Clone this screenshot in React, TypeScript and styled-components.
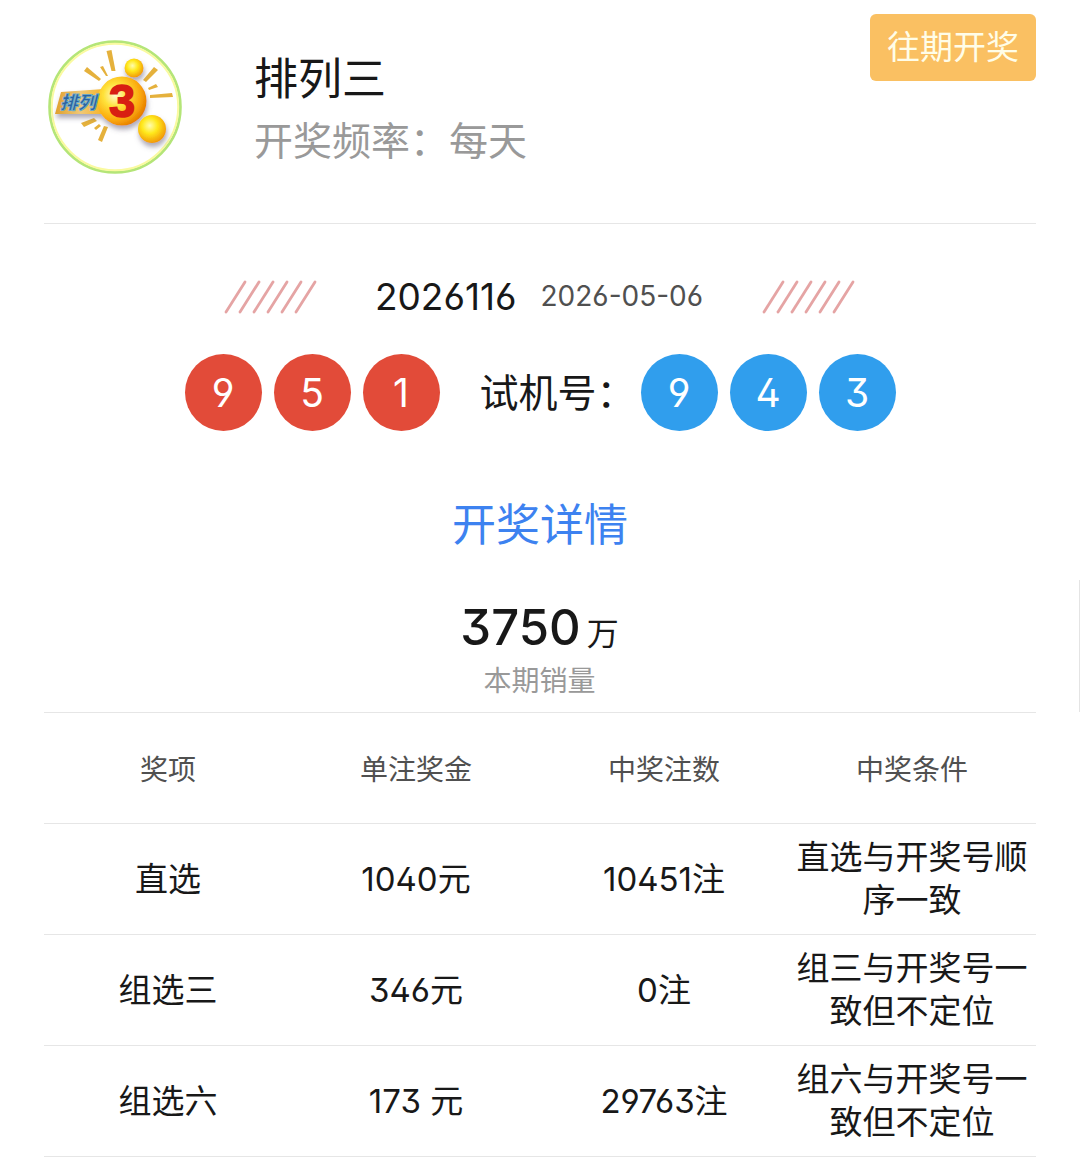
import React from "react";
import styled, { createGlobalStyle } from "styled-components";

const GlobalStyle = createGlobalStyle`
  *, *::before, *::after { box-sizing: border-box; }
  body {
    margin: 0;
    background: #fff;
    color: #181818;
    font-family: Inter, "Noto Sans CJK SC", sans-serif;
    font-feature-settings: "cv09", "ss01";
  }
`;

const Page = styled.main`
  padding-bottom: 1px;
`;

const Header = styled.header`
  display: flex;
  align-items: flex-start;
  margin: 0 44px;
  padding: 14px 0 49px;
  border-bottom: 1px solid #e6e6e6;
`;

const LogoSvg = styled.svg`
  flex: none;
  width: 134px;
  height: 134px;
  margin: 26px 72px 0 4px;
`;

const Heading = styled.div`
  flex: 1;
  padding-top: 33px;
`;

const Title = styled.h1`
  margin: 0;
  font-size: 44px;
  line-height: 64px;
  font-weight: 400;
`;

const Frequency = styled.p`
  margin: 0;
  font-size: 39px;
  line-height: 60px;
  color: #999;
`;

const HistoryButton = styled.button`
  height: 67px;
  padding: 0 17px;
  border: 0;
  border-radius: 6px;
  background: #fac062;
  color: #fffde8;
  font: inherit;
  font-size: 33px;
  line-height: 67px;
  cursor: pointer;
`;

const Draw = styled.section`
  display: flex;
  flex-direction: column;
  align-items: center;
  padding-top: 48px;
`;

const Issue = styled.div`
  display: flex;
  align-items: center;
  height: 48px;
`;

const StripeSvg = styled.svg`
  width: 96px;
  height: 36px;
`;

const IssueNumber = styled.span`
  margin-left: 56px;
  font-size: 37px;
`;

const IssueDate = styled.time`
  margin: 0 58px 0 24px;
  font-size: 28px;
  color: #505050;
`;

const Numbers = styled.div`
  display: flex;
  align-items: center;
  gap: 40px;
  margin-top: 34px;
`;

const BallGroup = styled.div`
  display: flex;
  align-items: center;
  gap: 12px;
`;

const Ball = styled.span<{ $color: string }>`
  display: grid;
  place-items: center;
  width: 77px;
  height: 77px;
  border-radius: 50%;
  background: ${(p) => p.$color};
  color: #fff;
  font-size: 39px;
`;

const TrialLabel = styled.span`
  width: 149px;
  font-size: 39px;
  line-height: 60px;
  white-space: nowrap;
`;

const DetailTitle = styled.h2`
  margin: 62px 0 23px;
  font-size: 44px;
  line-height: 64px;
  font-weight: 400;
  text-align: center;
  color: #3d82f0;
`;

const Sales = styled.section`
  border-right: 1px solid #e4e4e4;
  padding: 16px 0 10px;
  text-align: center;
`;

const Amount = styled.p`
  display: flex;
  justify-content: center;
  align-items: baseline;
  gap: 6px;
  height: 64px;
  margin: 0;
  font-size: 49px;
  line-height: 64px;
  font-weight: 500;
`;

const Unit = styled.span`
  font-size: 32px;
  font-weight: 400;
`;

const SalesLabel = styled.p`
  margin: 0;
  font-size: 28px;
  line-height: 42px;
  color: #999;
`;

const TableWrap = styled.div`
  padding: 0 44px;
`;

const PrizeTable = styled.table`
  width: 100%;
  table-layout: fixed;
  border-collapse: separate;
  border-spacing: 0;
  border-top: 1px solid #e6e6e6;
`;

const HeadCell = styled.th`
  height: 111px;
  padding: 0 8px;
  border-bottom: 1px solid #e6e6e6;
  font-size: 28px;
  font-weight: 400;
  color: #505050;
`;

const Cell = styled.td`
  height: 111px;
  padding: 0 8px;
  border-bottom: 1px solid #e6e6e6;
  font-size: 33px;
  line-height: 43px;
  text-align: center;
`;

const RED = "#e24b39";
const BLUE = "#309eed";

const drawn = [9, 5, 1];
const trial = [9, 4, 3];

const columns = ["奖项", "单注奖金", "中奖注数", "中奖条件"];
const prizes = [
  ["直选", "1040元", "10451注", "直选与开奖号顺序一致"],
  ["组选三", "346元", "0注", "组三与开奖号一致但不定位"],
  ["组选六", "173 元", "29763注", "组六与开奖号一致但不定位"],
];

function Logo() {
  return (
    <LogoSvg viewBox="0 0 134 134" role="img" aria-label="排列3">
      <defs>
        <radialGradient id="sun" cx="36%" cy="38%" r="68%">
          <stop offset="0" stopColor="#fffbd0" />
          <stop offset="0.35" stopColor="#ffe23a" />
          <stop offset="0.75" stopColor="#fba90c" />
          <stop offset="1" stopColor="#e57a00" />
        </radialGradient>
        <radialGradient id="drop" cx="42%" cy="38%" r="62%">
          <stop offset="0" stopColor="#fffcb0" />
          <stop offset="0.45" stopColor="#ffe91c" />
          <stop offset="1" stopColor="#f29a05" />
        </radialGradient>
        <linearGradient id="plate" x1="0" x2="1">
          <stop offset="0" stopColor="#dfa02c" />
          <stop offset="0.5" stopColor="#f0c878" />
          <stop offset="1" stopColor="#f8b21c" />
        </linearGradient>
        <filter id="shade" x="-30%" y="-30%" width="170%" height="180%">
          <feDropShadow dx="1" dy="4" stdDeviation="2.5" floodColor="#5b5570" floodOpacity="0.5" />
        </filter>
      </defs>
      <circle cx="67" cy="67" r="65.4" fill="#fff" stroke="#b4e578" strokeWidth="2.800" />
      <circle cx="67" cy="67" r="63.2" fill="none" stroke="#fafaa0" strokeWidth="2" />
      <g fill="#e5b13c">
        <path d="M58.500 11l5-1 4 21-4 0z" />
        <path d="M36 31l3-4 14 12-2 2z" />
        <path d="M52 27l3-1 5 10-2 0z" />
        <path d="M106 27l4 3-12 12-3-2z" />
        <path d="M108 44l2 3-9 3-1-2z" />
        <path d="M102 55l22-2 1 4-23 1z" />
        <path d="M33 83l13-5 3 3-13 6z" />
        <path d="M46 88l5-4 2 2-5 4z" />
        <path d="M50 100l6-14 4 1-6 15z" />
      </g>
      <g filter="url(#shade)">
        <path d="M13 52L56 49L58 74L7 74Z" fill="url(#plate)" />
        <circle cx="86" cy="28" r="9.500" fill="url(#drop)" />
        <circle cx="74" cy="61" r="24.500" fill="url(#sun)" />
        <circle cx="104" cy="89" r="14" fill="url(#drop)" />
      </g>
      <text
        x="12"
        y="69"
        fontFamily="Noto Sans CJK SC, sans-serif"
        fontSize="18"
        fontWeight="900"
        fontStyle="italic"
        fill="#2c62a0"
        stroke="#6fb0cf"
        strokeWidth="0.8"
      >
        排列
      </text>
      <text
        x="74"
        y="76.500"
        textAnchor="middle"
        fontFamily="Liberation Sans, sans-serif"
        fontSize="47"
        fontWeight="700"
        fill="#d81e12"
        stroke="#d81e12"
        strokeWidth="1.600"
      >
        3
      </text>
    </LogoSvg>
  );
}

function Stripes() {
  return (
    <StripeSvg viewBox="0 0 96 36" aria-hidden="true">
      {[0, 1, 2, 3, 4, 5].map((i) => (
        <path
          key={i}
          d={`M${3 + i * 14} 34L${22 + i * 14} 4`}
          stroke="#e5a4a4"
          strokeWidth="2.800"
          strokeLinecap="round"
        />
      ))}
    </StripeSvg>
  );
}

function Balls({ values, color }: { values: number[]; color: string }) {
  return (
    <BallGroup>
      {values.map((value, i) => (
        <Ball key={i} $color={color}>
          {value}
        </Ball>
      ))}
    </BallGroup>
  );
}

export default function App() {
  return (
    <>
      <GlobalStyle />
      <Page lang="zh-CN">
        <Header>
          <Logo />
          <Heading>
            <Title>排列三</Title>
            <Frequency>开奖频率：每天</Frequency>
          </Heading>
          <HistoryButton type="button">往期开奖</HistoryButton>
        </Header>

        <Draw>
          <Issue>
            <Stripes />
            <IssueNumber>2026116</IssueNumber>
            <IssueDate dateTime="2026-05-06">2026-05-06</IssueDate>
            <Stripes />
          </Issue>
          <Numbers>
            <Balls values={drawn} color={RED} />
            <BallGroup>
              <TrialLabel>试机号：</TrialLabel>
              <Balls values={trial} color={BLUE} />
            </BallGroup>
          </Numbers>
        </Draw>

        <DetailTitle>开奖详情</DetailTitle>

        <Sales>
          <Amount>
            3750<Unit>万</Unit>
          </Amount>
          <SalesLabel>本期销量</SalesLabel>
        </Sales>

        <TableWrap>
          <PrizeTable>
            <thead>
              <tr>
                {columns.map((name) => (
                  <HeadCell key={name} scope="col">
                    {name}
                  </HeadCell>
                ))}
              </tr>
            </thead>
            <tbody>
              {prizes.map((row) => (
                <tr key={row[0]}>
                  {row.map((value) => (
                    <Cell key={value}>{value}</Cell>
                  ))}
                </tr>
              ))}
            </tbody>
          </PrizeTable>
        </TableWrap>
      </Page>
    </>
  );
}
